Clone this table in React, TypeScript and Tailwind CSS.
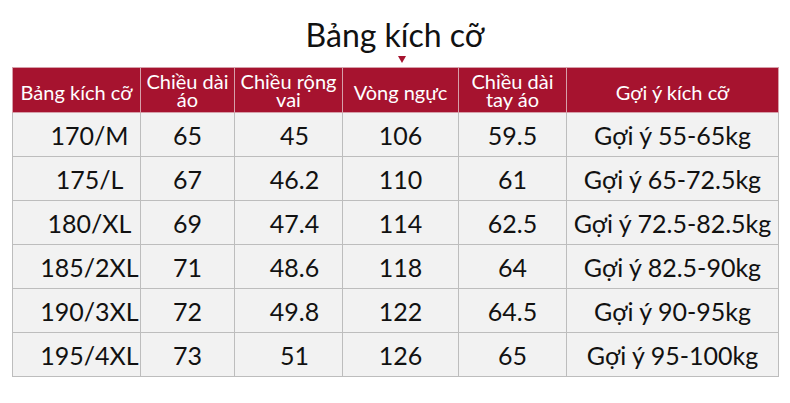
const rows = [
  ['170/M', '65', '45', '106', '59.5', 'Gợi ý 55-65kg'],
  ['175/L', '67', '46.2', '110', '61', 'Gợi ý 65-72.5kg'],
  ['180/XL', '69', '47.4', '114', '62.5', 'Gợi ý 72.5-82.5kg'],
  ['185/2XL', '71', '48.6', '118', '64', 'Gợi ý 82.5-90kg'],
  ['190/3XL', '72', '49.8', '122', '64.5', 'Gợi ý 90-95kg'],
  ['195/4XL', '73', '51', '126', '65', 'Gợi ý 95-100kg'],
];

const widths = ['w-[128px]', 'w-[94px]', 'w-[108px]', 'w-[116px]', 'w-[108px]', 'w-[212px]'];

export default function App() {
  return (
    <div className="w-[790px] h-[403px] bg-white font-['Lato','Noto_Sans',sans-serif] text-[#111]">
      {/* title */}
      <div className="flex flex-col items-center pt-[15px]">
        <h1 className="text-[32px] leading-[40px] font-normal">Bảng kích cỡ</h1>
        <div className="ml-[14px] mt-[1px] w-0 h-0 border-l-[4px] border-r-[4px] border-t-[7px] border-l-transparent border-r-transparent border-t-[#a6132f]" />
      </div>

      <table className="ml-[12px] mt-[4px] border-collapse table-fixed">
        <thead>
          <tr className="h-[45px] bg-[#a6132f] text-white">
            <th className={`${widths[0]} border border-[#d6a0aa] font-normal text-[20px] leading-[20px] pt-[3px]`}>Bảng kích cỡ</th>
            <th className={`${widths[1]} border border-[#d6a0aa] font-normal text-[20px] leading-[18px]`}>Chiều dài<br />áo</th>
            <th className={`${widths[2]} border border-[#d6a0aa] font-normal text-[20px] leading-[18px]`}>Chiều rộng<br />vai</th>
            <th className={`${widths[3]} border border-[#d6a0aa] font-normal text-[20px] leading-[20px] pt-[3px]`}>Vòng ngực</th>
            <th className={`${widths[4]} border border-[#d6a0aa] font-normal text-[20px] leading-[18px]`}>Chiều dài<br />tay áo</th>
            <th className={`${widths[5]} border border-[#d6a0aa] font-normal text-[20px] leading-[20px] pt-[3px]`}>Gợi ý kích cỡ</th>
          </tr>
        </thead>
        <tbody>
          {rows.map((r) => (
            <tr key={r[0]} className="h-[44px] bg-[#f2f2f2] text-[25px] leading-[30px]">
              <td className="border border-[#bdbdbd] text-center pl-[26px]">{r[0]}</td>
              <td className="border border-[#bdbdbd] text-center">{r[1]}</td>
              <td className="border border-[#bdbdbd] text-center pl-[12px]">{r[2]}</td>
              <td className="border border-[#bdbdbd] text-center">{r[3]}</td>
              <td className="border border-[#bdbdbd] text-center">{r[4]}</td>
              <td className="border border-[#bdbdbd] text-center">{r[5]}</td>
            </tr>
          ))}
        </tbody>
      </table>
    </div>
  );
}
